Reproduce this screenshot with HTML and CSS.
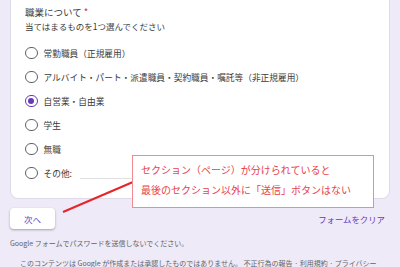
FILE: index.html
```html
<!DOCTYPE html>
<html lang="ja">
<head>
<meta charset="utf-8">
<link rel="stylesheet" href="styles.css">
</head>
<body>
<div class="page">
  <div class="card">
    <div class="q-title">職業について <span class="req">*</span></div>
    <div class="q-desc">当てはまるものを1つ選んでください</div>
    <div class="options">
      <div class="opt"><span class="radio"></span><span class="label">常勤職員（正規雇用）</span></div>
      <div class="opt"><span class="radio"></span><span class="label">アルバイト・パート・派遣職員・契約職員・嘱託等（非正規雇用）</span></div>
      <div class="opt"><span class="radio checked"></span><span class="label">自営業・自由業</span></div>
      <div class="opt"><span class="radio"></span><span class="label">学生</span></div>
      <div class="opt"><span class="radio"></span><span class="label">無職</span></div>
      <div class="opt"><span class="radio"></span><span class="label">その他:</span><span class="other-input"></span></div>
    </div>
  </div>
  <div class="actions">
    <button class="next">次へ</button>
    <span class="clear">フォームをクリア</span>
  </div>
  <div class="foot1">Google フォームでパスワードを送信しないでください。</div>
  <div class="foot2">このコンテンツは Google が作成または承認したものではありません。 不正行為の報告 · 利用規約 · プライバシー</div>

  <svg class="pointer" width="400" height="267" viewBox="0 0 400 267">
    <line x1="63" y1="212" x2="133" y2="182" stroke="#e5252a" stroke-width="2"/>
  </svg>
  <div class="callout">
    <div>セクション（ページ）が分けられていると</div>
    <div>最後のセクション以外に「送信」ボタンはない</div>
  </div>
</div>
</body>
</html>
```

FILE: styles.css
```css
* { box-sizing: border-box; }
html, body {
  margin: 0;
  padding: 0;
  width: 400px;
  height: 267px;
  overflow: hidden;
  background: #efeaf7;
  font-family: "Noto Sans CJK JP", "Noto Sans", sans-serif;
}
.page {
  position: relative;
  width: 400px;
  height: 267px;
  padding: 0 10px 0 10px;
}
.card {
  background: #fff;
  border: 1px solid #dedbe6;
  border-top: none;
  border-radius: 0 0 8px 8px;
  padding: 5px 14px 13px 14px;
  height: 199px;
}
.q-title {
  font-size: 9.5px;
  line-height: 14px;
  color: #3a3a3a;
}
.req { color: #d93025; }
.q-desc {
  font-size: 8.5px;
  line-height: 14px;
  color: #3a3a3a;
}
.options {
  margin-top: 8px;
  display: flex;
  flex-direction: column;
}
.opt {
  height: 24px;
  display: flex;
  align-items: center;
  font-size: 8.7px;
  color: #3a3a3a;
}
.radio {
  width: 12.5px;
  height: 12.5px;
  border: 1.5px solid #5f6368;
  border-radius: 50%;
  margin-right: 6px;
  flex: none;
  display: flex;
  align-items: center;
  justify-content: center;
}
.radio.checked { border-color: #673ab7; }
.radio.checked::after {
  content: "";
  width: 6px;
  height: 6px;
  border-radius: 50%;
  background: #673ab7;
}
.other-input {
  flex: 1;
  align-self: flex-end;
  margin: 0 40px 6px 8px;
  border-bottom: 1px solid #e0e0e0;
}
.actions {
  display: flex;
  justify-content: space-between;
  align-items: center;
  margin-top: 9px;
  padding-right: 5px;
}
.next {
  width: 45px;
  height: 21px;
  border: none;
  border-radius: 4px;
  background: #fff;
  box-shadow: 0 1px 2px rgba(60,64,67,0.3), 0 1px 3px rgba(60,64,67,0.15);
  color: #673ab7;
  font-family: inherit;
  font-size: 8.5px;
  padding: 0;
}
.clear {
  font-size: 8.4px;
  color: #673ab7;
}
.foot1 {
  margin-top: 8px;
  font-size: 7px;
  line-height: 12px;
  color: #5f6368;
}
.foot2 {
  margin-top: 8px;
  padding-left: 10px;
  font-size: 7px;
  line-height: 12px;
  color: #5f6368;
  white-space: nowrap;
}
.pointer {
  position: absolute;
  left: 0;
  top: 0;
  pointer-events: none;
}
.callout {
  position: absolute;
  left: 132px;
  top: 155px;
  width: 242px;
  height: 53px;
  background: #fff;
  border: 1px solid #f28b8f;
  padding: 4px 0 0 8px;
  color: #e8414a;
  font-size: 10px;
  line-height: 20px;
  white-space: nowrap;
}
```
